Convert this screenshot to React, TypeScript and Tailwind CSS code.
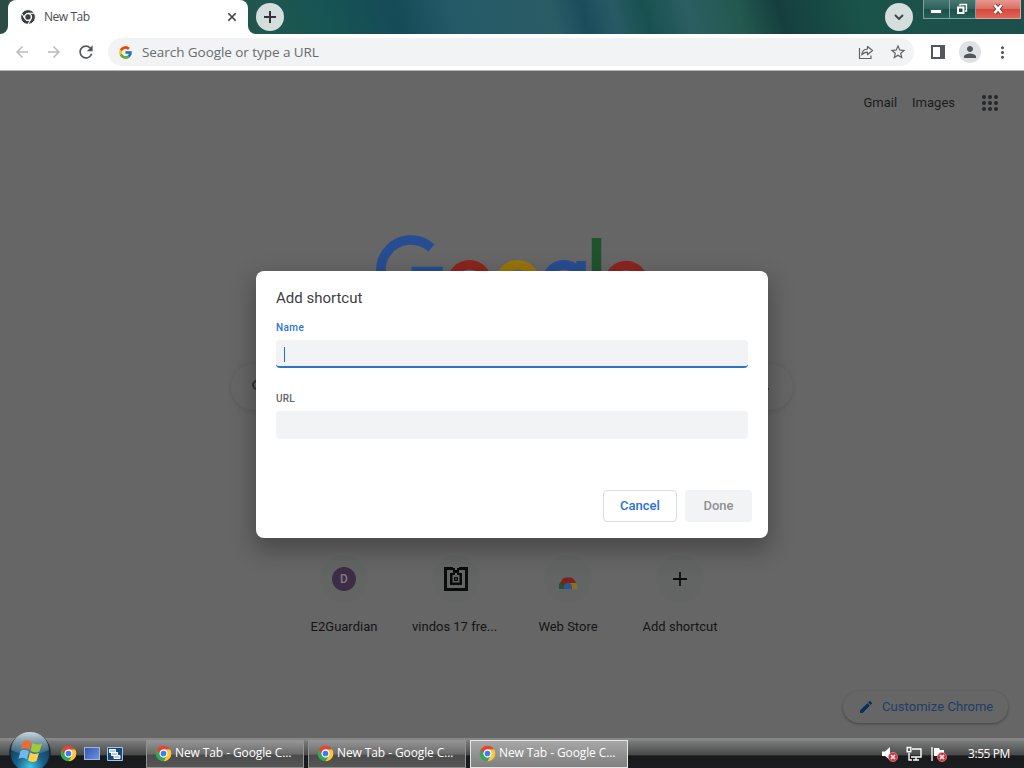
import { MdArrowBack, MdArrowForward, MdEdit, MdMoreVert, MdPerson, MdRefresh, MdStarBorder } from "react-icons/md";
import { FcGoogle } from "react-icons/fc";

const chromeColors = { red: "#e94235", green: "#33a852", yellow: "#fcc934", blue: "#3b7ded" };
const monoColors = { red: "#3c4043", green: "#3c4043", yellow: "#3c4043", blue: "#3c4043" };

function ChromeLogo({ size, mono = false }: { size: number; mono?: boolean }) {
  const c = mono ? monoColors : chromeColors;
  const blade = "M24 13H43.05A22 22 0 0 0 4.95 13L14.47 29.5A11 11 0 0 1 24 13z";
  const line = mono ? { stroke: "#fff", strokeWidth: 2.5 } : {};
  return (
    <svg width={size} height={size} viewBox="0 0 48 48" className="shrink-0">
      <circle cx="24" cy="24" r="12" fill="#fff" />
      <path d={blade} fill={c.red} {...line} />
      <path d={blade} fill={c.green} transform="rotate(-120 24 24)" {...line} />
      <path d={blade} fill={c.yellow} transform="rotate(120 24 24)" {...line} />
      <circle cx="24" cy="24" r="11" fill="#fff" />
      <circle cx="24" cy="24" r="8" fill={c.blue} />
    </svg>
  );
}

function TitleBar() {
  return (
    <div className="flex h-[34px] bg-[linear-gradient(75deg,#28534b_0%,#21584e_25%,#175454_32%,#154a57_39%,#245a67_44%,#2a5c66_54%,#1a4c5c_57%,#285a65_60%,#18504f_63%,#2b5e63_67%,#23594f_72%,#153f3f_76%,#1a5349_84%,#1c4f4b_100%)]">
      <div className="flex h-full w-2 items-end bg-white">
        <div className="h-full w-2 rounded-br-lg bg-[#2c4b44]" />
      </div>
      <div className="flex h-full w-60 items-center rounded-t-lg bg-white pr-[9px] pl-3">
        <ChromeLogo size={16} mono />
        <span className="ml-2 flex-1 font-['Open_Sans',sans-serif] text-xs tracking-[-0.450px] text-[#4a4d51]">New Tab</span>
        <svg width="14" height="14" viewBox="0 0 14 14" stroke="#3c4043" strokeWidth="1.6">
          <path d="M3.300 3.300l7.400 7.400M10.700 3.300l-7.400 7.400" />
        </svg>
      </div>
      <div className="h-full w-2 bg-white">
        <div className="h-full w-2 rounded-bl-lg bg-[#21554c]" />
      </div>
      <div className="mt-[3px] flex h-7 w-7 items-center justify-center rounded-full bg-[#d3dedd]">
        <svg width="14" height="14" viewBox="0 0 14 14" stroke="#303638" strokeWidth="2">
          <path d="M7 1v12M1 7h12" />
        </svg>
      </div>
      <div className="flex-1" />
      <div className="mt-[3px] mr-2.5 flex h-7 w-7 items-center justify-center rounded-full bg-[#d3dedd]">
        <svg width="12" height="12" viewBox="0 0 12 12" fill="none" stroke="#3c4043" strokeWidth="1.800">
          <path d="M2 4l4 4 4-4" />
        </svg>
      </div>
      <div className="mr-[3px] flex h-[19px]">
        <div className="flex w-[27px] justify-center border border-t-0 border-[#7d9f9d] bg-[linear-gradient(#497772,#2d625c_50%,#1c4f49_50%,#285f57)]">
          <div className="mt-[9px] mr-0.5 h-[5px] w-[12px] border border-[#335e5b] bg-white" />
        </div>
        <div className="flex w-[26px] items-center justify-center border-r border-b border-[#7d9f9d] bg-[linear-gradient(#497772,#2d625c_50%,#1c4f49_50%,#285f57)]">
          <svg width="12" height="12" viewBox="0 0 12 12" fill="none" stroke="#fff" className="mr-0.5">
            <path d="M4 3V1.500h6.500v6.500H9" strokeWidth="1.3" />
            <path d="M2 4.500h5.500v5.500H2z" strokeWidth="2" />
          </svg>
        </div>
        <div className="flex w-[45px] items-center justify-center border-r border-b border-[#e3a39b] bg-[linear-gradient(#e7998f,#dd6f65_48%,#d24a3d_50%,#e4645a)]">
          <svg width="12" height="12" viewBox="0 0 12 12">
            <path d="M2.500 2l7 8M9.500 2l-7 8" stroke="#7d3a38" strokeWidth="4.200" />
            <path d="M2.500 2l7 8M9.500 2l-7 8" stroke="#fff" strokeWidth="2.600" />
          </svg>
        </div>
      </div>
    </div>
  );
}

function Toolbar() {
  return (
    <div className="flex h-[37px] items-center border-b border-[#b5b5b5] bg-white pl-3.5">
      <MdArrowBack size={18} className="-mr-px ml-[-1px] text-[#b9bbbe]" />
      <MdArrowForward size={18} className="ml-[15px] text-[#b9bbbe]" />
      <MdRefresh size={20} className="ml-[13px] text-[#53565a]" />
      <div className="ml-3 flex h-7 w-[806px] items-center rounded-full bg-[#f1f3f4] pr-[7px] pl-2.5">
        <FcGoogle size={15} />
        <span className="ml-[9px] flex-1 font-['Open_Sans',sans-serif] text-[13.500px] tracking-[-0.06px] text-[#686c70]">Search Google or type a URL</span>
        <svg width="18" height="18" viewBox="0 0 18 18" fill="none" stroke="#5f6368" strokeWidth="1.2" strokeLinejoin="round">
          <path d="M2.500 5v10.500h11.500v-3" />
          <path d="M10.500 3.500v2.500C7 6.200 5 8.500 4.700 12c1.500-2 3.300-2.800 5.800-2.800v2.500L15.500 7.500z" />
        </svg>
        <MdStarBorder size={18} className="ml-3.5 text-[#5f6368]" />
      </div>
      <div className="ml-[17px] flex h-3.5 w-3.5 justify-end border-2 border-[#53565a]">
        <div className="h-full w-[3px] bg-[#53565a]" />
      </div>
      <div className="ml-3.5 flex h-[22px] w-[22px] items-center justify-center rounded-full bg-[#dee1e6]">
        <MdPerson size={18} className="text-[#53565a]" />
      </div>
      <MdMoreVert size={19} className="ml-3 text-[#53565a]" />
    </div>
  );
}

// only the upper part shows above the dialog
function GoogleLogo() {
  return (
    <svg width="272" height="92" viewBox="0 0 272 92" fill="none" strokeWidth="9.500">
      <path d="M55.400 13A30 30 0 1 0 62 48V36.500H35.500" stroke="#264d91" />
      <circle cx="93.500" cy="47.200" r="17.500" stroke="#8b241e" />
      <circle cx="141.500" cy="47.200" r="17.500" stroke="#97740c" />
      <circle cx="188" cy="47.200" r="17.500" stroke="#264d91" />
      <path d="M205 26v42a16 16 0 0 1-32 6" stroke="#264d91" />
      <path d="M220.500 3v65" stroke="#1f532d" />
      <path d="M236 54l30-13A17.200 17.200 0 1 0 264 58" stroke="#8b241e" />
    </svg>
  );
}

function AppsGrid() {
  return (
    <svg width="18" height="18" viewBox="0 0 18 18" fill="#26282a" className="ml-[11px]">
      {[3, 9, 15].map((y) => [3, 9, 15].map((x) => <circle key={`${x}-${y}`} cx={x} cy={y} r="2" />))}
    </svg>
  );
}

function PixelIcon() {
  return (
    <svg width="24" height="24" viewBox="0 0 24 24" fill="#0b0b0b">
      <path d="M0 0h9v3H3v18h18V3h-6V0h9v24H0z" />
      <path d="M9 1h2v2h2V1h2v5h3v12H6V6h3zM8.500 8v7.500h7V8H13V6h-2v2z" fillRule="evenodd" />
      <path d="M10 10h4v4h-4z" />
      <path d="M11 11.500h2v1h-2z" fill="#666" />
    </svg>
  );
}

function WebStoreIcon() {
  return (
    <svg width="20" height="24" viewBox="0 0 20 24" className="mt-1">
      <path d="M1 20V15l5-4v9z" fill="#21532f" />
      <path d="M2 14.500c2-4.500 4-6 6-6h4c3 0 5 2.500 6 5.500H11l-5 2z" fill="#7c211c" />
      <path d="M12 14h6l1 2.500v3.500h-5z" fill="#8b711e" />
      <path d="M6 20v-2a4 4 0 0 1 8 0v2z" fill="#2e5590" />
    </svg>
  );
}

const shortcuts = [
  {
    label: "E2Guardian",
    icon: <div className="flex h-6 w-6 items-center justify-center rounded-full bg-[#3d2d45] text-xs font-medium text-[#85788b]">D</div>,
  },
  { label: "vindos 17 fre...", icon: <PixelIcon />, truncated: true },
  { label: "Web Store", icon: <WebStoreIcon /> },
  {
    label: "Add shortcut",
    icon: (
      <svg width="14" height="14" viewBox="0 0 14 14" stroke="#0d0d0d" strokeWidth="1.800">
        <path d="M7 0v14M0 7h14" />
      </svg>
    ),
  },
];

function NewTabPage() {
  return (
    <div className="flex h-[667px] flex-col items-center bg-[#666]">
      <div className="flex h-16 w-full items-center justify-end gap-[15px] pr-[25px] text-[13px] text-[#1c1c1c]">
        <span>Gmail</span>
        <span>Images</span>
        <AppsGrid />
      </div>
      <div className="mt-[100px] h-[92px]">
        <GoogleLogo />
      </div>
      <div className="mt-[37px] flex h-[46px] w-[562px] items-center justify-between rounded-full pr-5 pl-[21px] shadow-[0_1px_5px_rgba(0,0,0,0.12)]">
        <svg width="14" height="14" viewBox="0 0 14 14" fill="none" stroke="#303234" strokeWidth="2">
          <circle cx="5" cy="5" r="4" />
          <path d="M8 8l5 5" />
        </svg>
        <div className="mt-1 mr-1 h-0.5 w-1 bg-[#333]" />
      </div>
      <div className="mt-[145px] grid grid-cols-4">
        {shortcuts.map((s) => (
          <div key={s.label} className="flex w-28 flex-col items-center">
            <div className="flex h-12 w-12 items-center justify-center rounded-full bg-[#636565]">{s.icon}</div>
            <span className={`mt-3.5 w-[88px] text-[13px] leading-5 whitespace-nowrap text-[#141414] ${s.truncated ? "text-left" : "text-center"}`}>
              {s.label}
            </span>
          </div>
        ))}
      </div>
      <div className="mt-[54px] mr-4 flex h-8 w-[165px] items-center self-end rounded-full bg-[#666] pl-[15px] text-[#0d2c59] shadow-[0_1px_3px_rgba(0,0,0,0.35)]">
        <MdEdit size={16} />
        <span className="ml-2 text-[13px] tracking-[0.05px] whitespace-nowrap text-[#203c66]">Customize Chrome</span>
      </div>
    </div>
  );
}

function AddShortcutDialog() {
  return (
    <div className="absolute top-[271px] left-64 flex h-[267px] w-lg flex-col rounded-lg bg-white px-5 pt-[17px] shadow-[0_10px_24px_2px_rgba(0,0,0,0.3)]">
      <h1 className="text-[15px] leading-5 text-[#3c4043]">Add shortcut</h1>
      <label className="mt-[13px] text-[10px] leading-3.5 font-medium tracking-[0.4px] text-[#2a73d9]">Name</label>
      <div className="mt-[5px] flex h-7 w-[472px] items-center rounded border-b-2 border-[#2a73cf] bg-[#f1f3f4] pl-2">
        <div className="mt-0.5 h-[15px] w-px bg-[#1b6fd0]" />
      </div>
      <label className="mt-6 text-[10px] leading-3.5 font-medium tracking-[0.2px] text-[#5f6368]">URL</label>
      <div className="mt-[5px] h-7 w-[472px] rounded bg-[#f1f3f4]" />
      <div className="mt-[51px] -mr-1 flex justify-end gap-2 text-[13px] font-medium">
        <button className="h-8 w-[74px] rounded border border-[#dadce0] text-[#2a6fdb]">Cancel</button>
        <button className="h-8 w-[67px] rounded bg-[#f1f3f4] text-[#8f9193]">Done</button>
      </div>
    </div>
  );
}

function StartOrb() {
  return (
    <svg width="44" height="36" viewBox="0 0 44 36" className="absolute bottom-0 left-2">
      <defs>
        <radialGradient id="orb" cx="0.5" cy="0.85" r="0.75">
          <stop offset="0" stopColor="#43c5e8" />
          <stop offset="0.45" stopColor="#1b6089" />
          <stop offset="1" stopColor="#14344a" />
        </radialGradient>
        <linearGradient id="gloss" x2="0" y2="1">
          <stop offset="0" stopColor="#dceaf0" stopOpacity="0.9" />
          <stop offset="1" stopColor="#dceaf0" stopOpacity="0.1" />
        </linearGradient>
      </defs>
      <circle cx="22" cy="21" r="20" fill="url(#orb)" stroke="#10252f" strokeWidth="1.500" />
      <path d="M3 18A19 18 0 0 1 41 18Q22 27 3 18z" fill="url(#gloss)" />
      <path d="M15 9.500q5-2.500 8.500 .5l-2 8q-4-3-8.500-.5z" fill="#ee6a35" />
      <path d="M24.500 11q4 2.500 9.500 .5l-2.500 8q-4.500 2-9-.5z" fill="#9ccb3b" />
      <path d="M12.500 19q4.500-2.500 8.500 .5l-2 8q-4-3-8.500-.5z" fill="#70b9ec" />
      <path d="M22 20.500q4 2.500 9 .5l-2.500 8q-4.500 2-8.500-.5z" fill="#fed14b" />
    </svg>
  );
}

function ErrorBadge() {
  return (
    <g>
      <circle cx="12" cy="11" r="4.600" fill="#d6303b" stroke="#eda6aa" strokeWidth="0.600" />
      <path d="M10 9l4 4M14 9l-4 4" stroke="#fff" strokeWidth="1.500" />
    </g>
  );
}

const windows = [
  { id: 1, active: false },
  { id: 2, active: false },
  { id: 3, active: true },
];

function Taskbar() {
  return (
    <div className="relative flex h-[30px] items-center border-t border-[#878787] bg-[linear-gradient(#8a8a8a_0%,#737474_12%,#484949_55%,#17191b_58%,#1b1d20_100%)] pl-[60px] font-['Open_Sans',sans-serif]">
      <StartOrb />
      <div className="flex w-[86px] items-center gap-[7px]">
        <ChromeLogo size={17} />
        <div className="h-[13px] w-4 border border-[#a2b7dc] bg-[linear-gradient(135deg,#3655ae,#6d91df)]" />
        <svg width="16" height="14" viewBox="0 0 16 14">
          <path d="M.5.5h15v13H.5z" fill="#184879" stroke="#a5c4e3" />
          <path d="M2.500 2.500h6v3h-6zM4.500 5.500h6v3h-6zM7 8.500h6v3H7z" fill="#b3cce9" stroke="#fff" />
        </svg>
      </div>
      <div className="flex gap-1">
        {windows.map((w) => (
          <div
            key={w.id}
            className={`flex h-7 w-[158px] items-center border pl-2 text-xs text-white ${
              w.active
                ? "border-[#e5e5e5] bg-[linear-gradient(#a7a7a7,#919191_50%,#808080)]"
                : "border-[#929292] bg-[linear-gradient(#949494,#6b6b6b_50%,#4c4c4c_55%,#555)]"
            }`}
          >
            <ChromeLogo size={17} />
            <span className="mb-px ml-[3px] tracking-[-0.1px] whitespace-nowrap">New Tab - Google C...</span>
          </div>
        ))}
      </div>
      <div className="ml-auto flex items-center gap-2 pr-3.5">
        <svg width="17" height="16" viewBox="0 0 17 16">
          <path d="M1 5.500h3L9 1v13L4 10H1z" fill="#fff" />
          <ErrorBadge />
        </svg>
        <svg width="16" height="16" viewBox="0 0 16 16" fill="none" stroke="#fff" strokeWidth="1.400">
          <path d="M6 3h9v8H5M10 11v3M7 14h6M3 7v7h3" />
          <path d="M1.200 1.500h3.600v4.300H1.200z" />
        </svg>
        <svg width="17" height="16" viewBox="0 0 17 16">
          <path d="M2 1v14" stroke="#fff" strokeWidth="1.300" />
          <path d="M4 2h5l1 2h4v6H4z" fill="#fff" />
          <ErrorBadge />
        </svg>
        <span className="ml-[13px] text-xs tracking-[-0.400px] whitespace-nowrap text-white">3:55 PM</span>
      </div>
    </div>
  );
}

export default function App() {
  return (
    <div className="relative h-[768px] w-[1024px] overflow-hidden bg-[#666] font-[Roboto,sans-serif]">
      <TitleBar />
      <Toolbar />
      <NewTabPage />
      <Taskbar />
      <AddShortcutDialog />
    </div>
  );
}
